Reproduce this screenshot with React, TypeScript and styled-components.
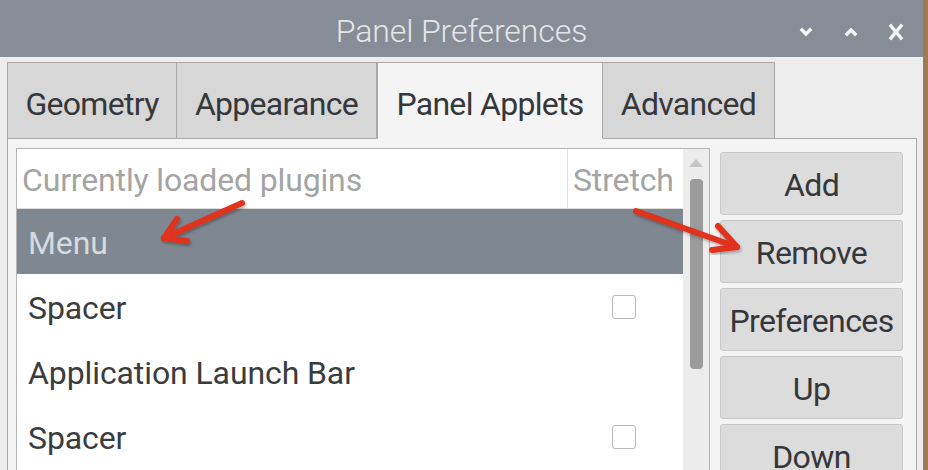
import React from 'react';
import styled, { createGlobalStyle } from 'styled-components';

const GlobalStyle = createGlobalStyle`
  html, body {
    margin: 0;
    padding: 0;
    width: 928px;
    height: 470px;
    overflow: hidden;
    background: #a07a52;
    font-family: Roboto, "Liberation Sans", sans-serif;
  }
`;

const Stage = styled.div`
  position: relative;
  width: 928px;
  height: 470px;
`;

const Window = styled.div`
  width: 923px;
  height: 470px;
  display: flex;
  flex-direction: column;
  background: #ededed;
`;

const TitleBar = styled.div`
  height: 57px;
  flex: none;
  background: #868d97;
  border-bottom: 1px solid #f2f2f2;
  display: flex;
  align-items: center;
  position: relative;
`;

const Title = styled.div`
  flex: 1;
  text-align: center;
  color: #e4e6e8;
  font-size: 32px;
  font-weight: 300;
  letter-spacing: -0.1px;
  padding-top: 5px;
`;

const WinButtons = styled.div`
  position: absolute;
  right: 18px;
  top: 3px;
  height: 57px;
  display: flex;
  align-items: center;
  gap: 27px;
`;

const Body = styled.div`
  flex: 1;
  display: flex;
  flex-direction: column;
  padding: 4px 6px 0 7px;
  min-height: 0;
`;

const Tabs = styled.div`
  display: flex;
  height: 76px;
  flex: none;
  position: relative;
  z-index: 1;
`;

const Tab = styled.div<{ active?: boolean; first?: boolean; w: number }>`
  display: flex;
  align-items: center;
  justify-content: center;
  width: ${(p) => p.w}px;
  box-sizing: border-box;
  padding-top: 7px;
  font-size: 32px;
  color: #35373a;
  letter-spacing: -0.7px;
  background: ${(p) => (p.active ? '#f4f4f4' : '#d7d7d7')};
  border: 1px solid #a9a9a9;
  border-left-width: ${(p) => (p.first || p.active ? 1 : 0)}px;
  border-bottom: ${(p) => (p.active ? '1px solid #f4f4f4' : '1px solid #a9a9a9')};
  margin-bottom: -1px;
`;

const Panel = styled.div`
  flex: 1;
  background: #f4f4f4;
  border: 1px solid #a9a9a9;
  border-bottom: none;
  display: flex;
  padding: 9px 13px 0 8px;
  gap: 10px;
  min-height: 0;
`;

const TreeFrame = styled.div`
  flex: 1;
  display: flex;
  border: 1px solid #b4b4b4;
  border-bottom: none;
  background: #ededed;
`;

const List = styled.div`
  flex: 1;
  background: #fff;
  display: flex;
  flex-direction: column;
`;

const HeaderRow = styled.div`
  height: 59px;
  display: flex;
  border-bottom: 1px solid #dcdcdc;
  color: #a4a4a4;
  font-size: 32px;
  letter-spacing: -0.15px;
`;

const HeaderCell = styled.div<{ grow?: boolean }>`
  display: flex;
  align-items: center;
  padding-left: ${(p) => (p.grow ? 5 : 5)}px;
  padding-top: 3px;
  flex: ${(p) => (p.grow ? 1 : 'none')};
  width: ${(p) => (p.grow ? 'auto' : '116px')};
  box-sizing: border-box;
  border-left: ${(p) => (p.grow ? 'none' : '1px solid #e2e2e2')};
`;

const Row = styled.div<{ selected?: boolean }>`
  height: 65px;
  display: flex;
  align-items: center;
  background: ${(p) => (p.selected ? '#7f8791' : '#fff')};
  color: ${(p) => (p.selected ? '#d6dbe0' : '#3a3c3e')};
  font-size: 32px;
  letter-spacing: -0.1px;
`;

const RowLabel = styled.div`
  flex: 1;
  padding-left: 11px;
  padding-top: 2px;
`;

const StretchCell = styled.div`
  width: 116px;
  display: flex;
  justify-content: flex-start;
  padding-left: 45px;
  box-sizing: border-box;
`;

const CheckBox = styled.div`
  width: 24px;
  height: 24px;
  border: 1px solid #b9b9b9;
  border-radius: 3px;
  background: #fff;
  box-sizing: border-box;
`;

const ScrollTrack = styled.div`
  width: 26px;
  display: flex;
  flex-direction: column;
  align-items: center;
  padding-top: 10px;
  background: #ececec;
`;

const ScrollThumb = styled.div`
  width: 13px;
  height: 190px;
  margin-top: 12px;
  border-radius: 4px;
  background: #9b9b9b;
`;

const ButtonCol = styled.div`
  width: 183px;
  display: flex;
  flex-direction: column;
  gap: 5px;
  padding-top: 4px;
`;

const Button = styled.div`
  height: 63px;
  flex: none;
  box-sizing: border-box;
  display: flex;
  align-items: center;
  justify-content: center;
  padding-top: 3px;
  background: #dcdcdc;
  border: 1px solid #c8c8c8;
  border-radius: 3px;
  font-size: 32px;
  color: #35373a;
  letter-spacing: -0.6px;
`;

const Overlay = styled.svg`
  position: absolute;
  left: 0;
  top: 0;
  pointer-events: none;
`;

const plugins = [
  { name: 'Menu', selected: true, check: false },
  { name: 'Spacer', check: true },
  { name: 'Application Launch Bar', check: false },
  { name: 'Spacer', check: true },
];

const tabs = [
  { label: 'Geometry', w: 170 },
  { label: 'Appearance', w: 200 },
  { label: 'Panel Applets', w: 226, active: true },
  { label: 'Advanced', w: 172 },
];

const WinIcon = ({ d }: { d: string }) => (
  <svg width="18" height="18" viewBox="0 0 18 18">
    <path d={d} stroke="#f4f4f4" strokeWidth="3.4" fill="none" strokeLinecap="square" />
  </svg>
);

const Arrow = ({ from, tip, w1, w2 }: { from: number[]; tip: number[]; w1: number[]; w2: number[] }) => (
  <g stroke="#e1301f" strokeWidth="6" strokeLinecap="round" strokeLinejoin="round" fill="none">
    <path d={`M${from[0]} ${from[1]} L${tip[0]} ${tip[1]}`} />
    <path d={`M${w1[0]} ${w1[1]} L${tip[0]} ${tip[1]} L${w2[0]} ${w2[1]}`} />
  </g>
);

const App = () => {
  return (
    <Stage>
      <GlobalStyle />
      <Window>
        <TitleBar>
          <Title>Panel Preferences</Title>
          <WinButtons>
            <WinIcon d="M5 7 L9 11 L13 7" />
            <WinIcon d="M5 11 L9 7 L13 11" />
            <WinIcon d="M4 3 L14 15 M14 3 L4 15" />
          </WinButtons>
        </TitleBar>
        <Body>
          <Tabs>
            {tabs.map((t, i) => (
              <Tab key={t.label} w={t.w} active={t.active} first={i === 0}>
                {t.label}
              </Tab>
            ))}
          </Tabs>
          <Panel>
            <TreeFrame>
              <List>
                <HeaderRow>
                  <HeaderCell grow>Currently loaded plugins</HeaderCell>
                  <HeaderCell>Stretch</HeaderCell>
                </HeaderRow>
                {plugins.map((p, i) => (
                  <Row key={i} selected={p.selected}>
                    <RowLabel>{p.name}</RowLabel>
                    <StretchCell>{p.check && <CheckBox />}</StretchCell>
                  </Row>
                ))}
              </List>
              <ScrollTrack>
                <svg width="14" height="8" viewBox="0 0 14 8">
                  <path d="M0 8 L7 0 L14 8 Z" fill="#c4c4c4" />
                </svg>
                <ScrollThumb />
              </ScrollTrack>
            </TreeFrame>
            <ButtonCol>
              <Button>Add</Button>
              <Button>Remove</Button>
              <Button>Preferences</Button>
              <Button>Up</Button>
              <Button>Down</Button>
            </ButtonCol>
          </Panel>
        </Body>
      </Window>
      <Overlay width="928" height="470" viewBox="0 0 928 470">
        <defs>
          <filter id="sh" x="-10%" y="-10%" width="120%" height="120%">
            <feDropShadow dx="1" dy="2" stdDeviation="1.5" floodColor="#000" floodOpacity="0.3" />
          </filter>
        </defs>
        <g filter="url(#sh)">
          <Arrow from={[242, 203]} tip={[164, 238]} w1={[177, 219]} w2={[187, 241]} />
          <Arrow from={[636, 211]} tip={[737, 247]} w1={[718, 226]} w2={[712, 250]} />
        </g>
      </Overlay>
    </Stage>
  );
};

export default App;
